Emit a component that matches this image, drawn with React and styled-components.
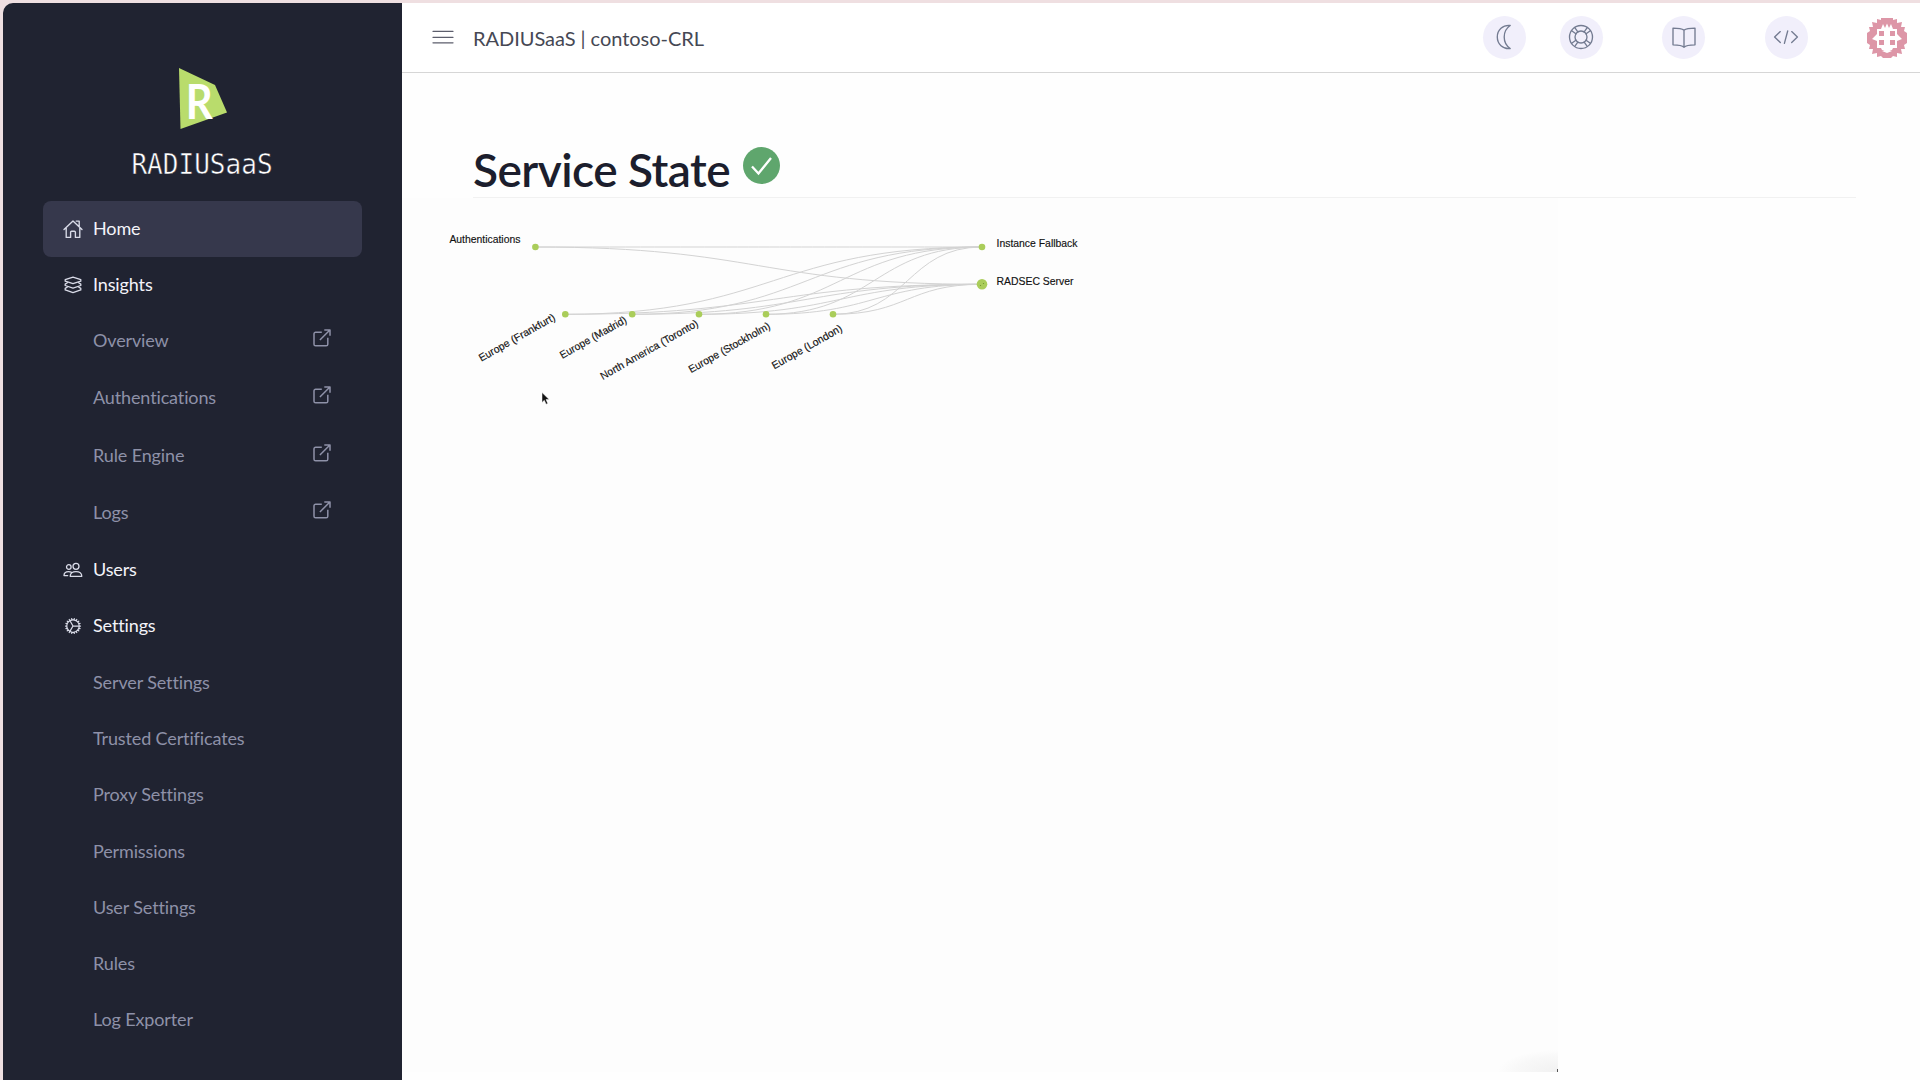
import React from "react";
import styled, { createGlobalStyle } from "styled-components";
import { HiOutlineCog } from "react-icons/hi2";

const GlobalStyle = createGlobalStyle`
  *, *::before, *::after { box-sizing: border-box; }
  html, body, #root { height: 100%; }
  body {
    margin: 0;
    overflow: hidden;
    background: #efdfe1;
    font-family: Lato, "Open Sans", sans-serif;
  }
`;

const Window = styled.div`
  display: flex;
  height: 1080px;
  padding: 3px 0 0 3px;
`;

const Sidebar = styled.aside`
  flex: none;
  width: 399px;
  padding: 65px 40px 0;
  background: #202331;
  border-top-left-radius: 10px;
`;

const Brand = styled.div`
  display: flex;
  flex-direction: column;
  align-items: center;
  height: 133px;
  svg { display: block; overflow: visible; }
`;

const WordMark = styled.div`
  margin: 15px 1px 0 0;
  color: #fff;
  font-family: "DejaVu Sans Mono", monospace;
  font-size: 28.8px;
  line-height: 40px;
  white-space: nowrap;
  transform: scaleX(0.905);
  -webkit-text-stroke: 0.5px #202331;
`;

const Nav = styled.nav`
  display: flex;
  flex-direction: column;
`;

const NavItem = styled.a`
  display: flex;
  align-items: center;
  flex: none;
  height: ${(p) => p.$height || 56.34}px;
  padding: 0 31px 0 ${(p) => (p.$sub ? 50 : 20)}px;
  border-radius: 8px;
  background: ${(p) => (p.$active ? "#36384c" : "transparent")};
  color: ${(p) => (p.$sub ? "#8e91a8" : "#f4f4fa")};
  font-size: 18px;
  line-height: 24px;
  svg { flex: none; display: block; }
`;

const NavLabel = styled.span`
  flex: 1;
  margin-bottom: 2px;
  letter-spacing: -0.13px;
  white-space: nowrap;
`;

const IconSlot = styled.span`
  display: flex;
  width: 30px;
  color: #d9dbe8;
`;

const ExternalSlot = styled.span`
  display: flex;
  margin-top: -6px;
`;

const Main = styled.main`
  flex: 1;
  min-width: 0;
  display: flex;
  flex-direction: column;
  background: #fefefe;
`;

const Header = styled.header`
  display: flex;
  align-items: center;
  flex: none;
  height: 70px;
  padding: 0 13px 1px 30px;
  background: #ffffff;
  border-bottom: 1px solid #d6d6d6;
  svg { display: block; }
`;

const Title = styled.div`
  flex: 1;
  margin-left: 19px;
  padding-top: 1px;
  color: #464854;
  font-size: 20px;
  line-height: 24px;
  letter-spacing: -0.04px;
`;

const Actions = styled.div`
  display: flex;
  align-items: center;
`;

const RoundButton = styled.button`
  display: flex;
  align-items: center;
  justify-content: center;
  width: 43px;
  height: 43px;
  margin: 0 ${(p) => p.$gap}px 0 0;
  padding: 0;
  border: 0;
  border-radius: 50%;
  background: #f1effb;
  color: #737b91;
`;

const AvatarSlot = styled.span`
  display: flex;
  margin-top: 1px;
`;

const Heading = styled.div`
  display: flex;
  align-items: flex-start;
  flex: none;
  height: 125px;
  margin: 0 64px 0 71px;
  padding-top: 69px;
  border-bottom: 1px solid #f1f1f1;
`;

const H1 = styled.h1`
  margin: 0 13px 0 0;
  color: #1c1e2d;
  font-size: 46px;
  font-weight: 600;
  line-height: 56px;
  letter-spacing: -0.54px;
  white-space: nowrap;
`;

const Badge = styled.svg`
  display: block;
  margin-top: 5px;
`;

const Canvas = styled.section`
  flex: none;
  width: 1156px;
  height: 874px;
  background:
    radial-gradient(ellipse 60px 22px at 100% 100%, #f1f1f1 0%, #f8f8f8 70%, rgba(253, 253, 253, 0) 100%),
    #fdfdfd;
  svg { display: block; }
`;

const stroke = (w) => ({
  fill: "none",
  stroke: "currentColor",
  strokeWidth: w,
  strokeLinecap: "round",
  strokeLinejoin: "round",
});

const HomeIcon = () => (
  <svg width="20" height="20" viewBox="0 0 20 20" {...stroke(1.35)}>
    <path d="M1 10.6 10 1.9l9 8.7M3.2 8.9v9.5h4.4v-5.2c0-.6.4-1 1-1h2.8c.6 0 1 .4 1 1v5.2h4.4V8.9M13.2 2.1h3v5.3" />
  </svg>
);

const LayersIcon = () => (
  <svg width="20" height="20" viewBox="0 0 20 20" {...stroke(1.3)}>
    <path d="M2.2 4.700 10 2.1l7.800 2.600v1.500L10 8.700 2.200 6.200z" />
    <path d="m4.400 7.700-2.200 1.400v1.400L10 13.100l7.800-2.600V9.100l-2.200-1.400" />
    <path d="m4.400 12-2.200 1.400v1.500L10 17.600l7.800-2.700v-1.500L15.600 12" />
  </svg>
);

const UsersIcon = () => (
  <svg width="20" height="20" viewBox="0 0 20 20" {...stroke(1.3)}>
    <circle cx="13" cy="6.3" r="3" />
    <circle cx="5.800" cy="7" r="2.300" />
    <path d="M7.200 16.300h11.600c0-3-2.300-4.700-5.800-4.700s-5.800 1.700-5.800 4.700zM4.700 15.600H1c0-2.400 1.700-4 4.600-4 1.100 0 1.900.2 2.600.5" />
  </svg>
);

const ExternalIcon = () => (
  <svg width="18" height="18" viewBox="0 0 18 18" {...stroke(1.5)} strokeLinecap="butt">
    <path d="M8.800 3.300H2.600c-.9 0-1.600.7-1.600 1.600v10.300c0 .9.700 1.600 1.600 1.600h10.600c.9 0 1.600-.7 1.600-1.600V8.800M6.900 11 16.900 1M11.300 1H17v5.700" />
  </svg>
);

const BrandMark = () => (
  <svg width="48" height="61" viewBox="0 0 48 61">
    <path d="M0 0 36 17 48 44.500 1.500 61z" fill="#b9dc6c" />
    <text x="6.800" y="51" fill="#fff" fontFamily="Lato" fontWeight="700" fontSize="48" textLength="27" lengthAdjust="spacingAndGlyphs">R</text>
  </svg>
);

const MoonIcon = () => (
  <svg width="26" height="26" viewBox="0 0 26 26" {...stroke(1.35)}>
    <path d="M18.200 1.500C10.800.8 5.300 6 5.300 13s5.500 12.200 12.900 11.500C14.500 22 12.200 18 12.200 13s2.300-9 6-11.500z" />
  </svg>
);

const LifeIcon = () => (
  <svg width="26" height="26" viewBox="0 0 26 26" {...stroke(1.35)}>
    <circle cx="13" cy="13" r="11.500" />
    <circle cx="13" cy="13" r="6" />
    {[0, 90, 180, 270].map((a) => (
      <path key={a} transform={`rotate(${a} 13 13)`} d="m16.200 7.900 3-4.200M18.100 9.800l4.200-3" />
    ))}
  </svg>
);

const BookIcon = () => (
  <svg width="26" height="26" viewBox="0 0 26 26" {...stroke(1.35)}>
    <path d="M13 6.200C10.800 4.500 7 4.100 2 4.100v16.700c5 0 9 .3 11 2.400 2-2.100 6-2.400 11-2.400V4.100c-5 0-8.800.4-11 2.100zM13 6.200v17" />
  </svg>
);

const CodeIcon = () => (
  <svg width="26" height="26" viewBox="0 0 26 26" {...stroke(1.35)}>
    <path d="M7.300 7.600 1.600 13l5.700 5.500M18.700 7.600l5.700 5.400-5.700 5.500M14.700 7l-3.300 12.300" />
  </svg>
);

const MenuIcon = () => (
  <svg width="22" height="16" viewBox="0 0 22 16" {...stroke(1.3)}>
    <path d="M1 2.300h20M1 8.300h20M1 13.800h20" stroke="#5c5e6c" />
  </svg>
);

const Avatar = () => (
  <svg width="40" height="40" viewBox="0 0 40 40">
    <path
      fill="#dd96a7"
      d="M14 0h12v2l4-1v4l5-1-1 5 4 0-1 4 3 2v10l-3 2 1 4h-4l1 5-5-1v4l-4-1-2 2h-8l-2-2-4 1v-4l-5 1 1-5H2l1-4-3-2V15l3-2-1-4h4L5 4l5 1V1l4 1z"
    />
    <path
      fill="#fff"
      d="M10 11h4l2-5 2 4 2-4.500 2 4.500 2-4 2 5h4v5l5 5-5 2v7h-4l-1 2h-10l-1-2h-4v-7l-5-2 5-5zM15 33l5-2 5 2-5 2z"
    />
    <path fill="#dd96a7" d="M12 13h5v5h-5zM23 13h5v5h-5zM12 22h5v5h-5zM23 22h5v5h-5z" />
  </svg>
);

const NAV = [
  { label: "Home", icon: <HomeIcon />, height: 56, active: true },
  { label: "Insights", icon: <LayersIcon />, height: 55.5 },
  { label: "Overview", external: true },
  { label: "Authentications", external: true },
  { label: "Rule Engine", external: true },
  { label: "Logs", external: true },
  { label: "Users", icon: <UsersIcon /> },
  { label: "Settings", icon: <HiOutlineCog size={20} />, height: 56.6 },
  { label: "Server Settings" },
  { label: "Trusted Certificates" },
  { label: "Proxy Settings" },
  { label: "Permissions" },
  { label: "User Settings" },
  { label: "Rules" },
  { label: "Log Exporter", height: 55.6 },
];

const ACTIONS = [
  { name: "theme", icon: <MoonIcon />, gap: 33.5 },
  { name: "support", icon: <LifeIcon />, gap: 59.5 },
  { name: "docs", icon: <BookIcon />, gap: 59.5 },
  { name: "api", icon: <CodeIcon />, gap: 59.5 },
];

const REGIONS = [
  { label: "Europe (Frankfurt)", x: 163.3, tx: 154, ty: 121.500, len: 86 },
  { label: "Europe (Madrid)", x: 230.200, tx: 225.500, ty: 124, len: 75 },
  { label: "North America (Toronto)", x: 297, tx: 297, ty: 127.500, len: 110.500 },
  { label: "Europe (Stockholm)", x: 364, tx: 369, ty: 130, len: 92 },
  { label: "Europe (London)", x: 431, tx: 441, ty: 132.500, len: 79 },
];
const SOURCE = { x: 133.400, y: 49 };
const TARGETS = [
  { label: "Instance Fallback", x: 580, y: 49, r: 3.300, len: 81 },
  { label: "RADSEC Server", x: 580, y: 86.300, r: 5.300, len: 77 },
];

const link = (a, b) => {
  const m = (a.x + b.x) / 2;
  return `M${a.x} ${a.y}C${m} ${a.y} ${m} ${b.y} ${b.x} ${b.y}`;
};

const StateGraph = () => (
  <svg width="1156" height="874" viewBox="0 0 1156 874" fontFamily="Liberation Sans, Arial, sans-serif" fontSize="10.500">
    <g fill="none" stroke="#d3d3d3" strokeWidth="1">
      {[SOURCE, ...REGIONS.map((r) => ({ x: r.x, y: 116.300 }))].map((s) =>
        TARGETS.map((t) => <path key={`${s.x}-${t.y}`} d={link(s, t)} />)
      )}
    </g>
    <g fill="#aacd5a">
      <circle cx={SOURCE.x} cy={SOURCE.y} r="3.300" />
      {REGIONS.map((r) => <circle key={r.label} cx={r.x} cy="116.300" r="3.300" />)}
      {TARGETS.map((t) => <circle key={t.label} cx={t.x} cy={t.y} r={t.r} />)}
    </g>
    <g fill="#6b8f2c">
      <circle cx="578.500" cy="87.500" r=".6" />
      <circle cx="581.500" cy="85.500" r=".6" />
    </g>
    <g fill="#111" stroke="#111" strokeWidth=".15">
      <text x="47.400" y="45.200" textLength="71" lengthAdjust="spacingAndGlyphs">Authentications</text>
      {TARGETS.map((t) => (
        <text key={t.label} x="594.500" y={t.y + 0.3} textLength={t.len} lengthAdjust="spacingAndGlyphs">{t.label}</text>
      ))}
      {REGIONS.map((r) => (
        <text
          key={r.label}
          textAnchor="end"
          textLength={r.len}
          lengthAdjust="spacingAndGlyphs"
          transform={`translate(${r.tx} ${r.ty}) rotate(-29.500)`}
        >
          {r.label}
        </text>
      ))}
    </g>
    <path d="M140 194.500v10l2.300-2.200 1.800 3.900 1.700-.8-1.800-3.800h3.200z" fill="#111" stroke="#fff" strokeWidth=".5" />
    <path d="M1155 871h1v3h-1z" fill="#555" />
  </svg>
);

export default function App() {
  return (
    <>
      <GlobalStyle />
      <Window>
        <Sidebar>
          <Brand>
            <BrandMark />
            <WordMark>RADIUSaaS</WordMark>
          </Brand>
          <Nav>
            {NAV.map((item) => (
              <NavItem
                key={item.label}
                $sub={!item.icon}
                $active={item.active}
                $height={item.height || (item.external ? 57.25 : undefined)}
              >
                {item.icon && <IconSlot>{item.icon}</IconSlot>}
                <NavLabel>{item.label}</NavLabel>
                {item.external && <ExternalSlot><ExternalIcon /></ExternalSlot>}
              </NavItem>
            ))}
          </Nav>
        </Sidebar>
        <Main>
          <Header>
            <MenuIcon />
            <Title>RADIUSaaS | contoso-CRL</Title>
            <Actions>
              {ACTIONS.map((a) => (
                <RoundButton key={a.name} $gap={a.gap} aria-label={a.name}>{a.icon}</RoundButton>
              ))}
              <AvatarSlot><Avatar /></AvatarSlot>
            </Actions>
          </Header>
          <Heading>
            <H1>Service State</H1>
            <Badge width="37" height="37" viewBox="0 0 37 37">
              <circle cx="18.500" cy="18.500" r="18.500" fill="#5fa66d" />
              <path d="m9 19.500 6.500 7L28 11" fill="none" stroke="#fff" strokeWidth="2.300" />
            </Badge>
          </Heading>
          <Canvas>
            <StateGraph />
          </Canvas>
        </Main>
      </Window>
    </>
  );
}
